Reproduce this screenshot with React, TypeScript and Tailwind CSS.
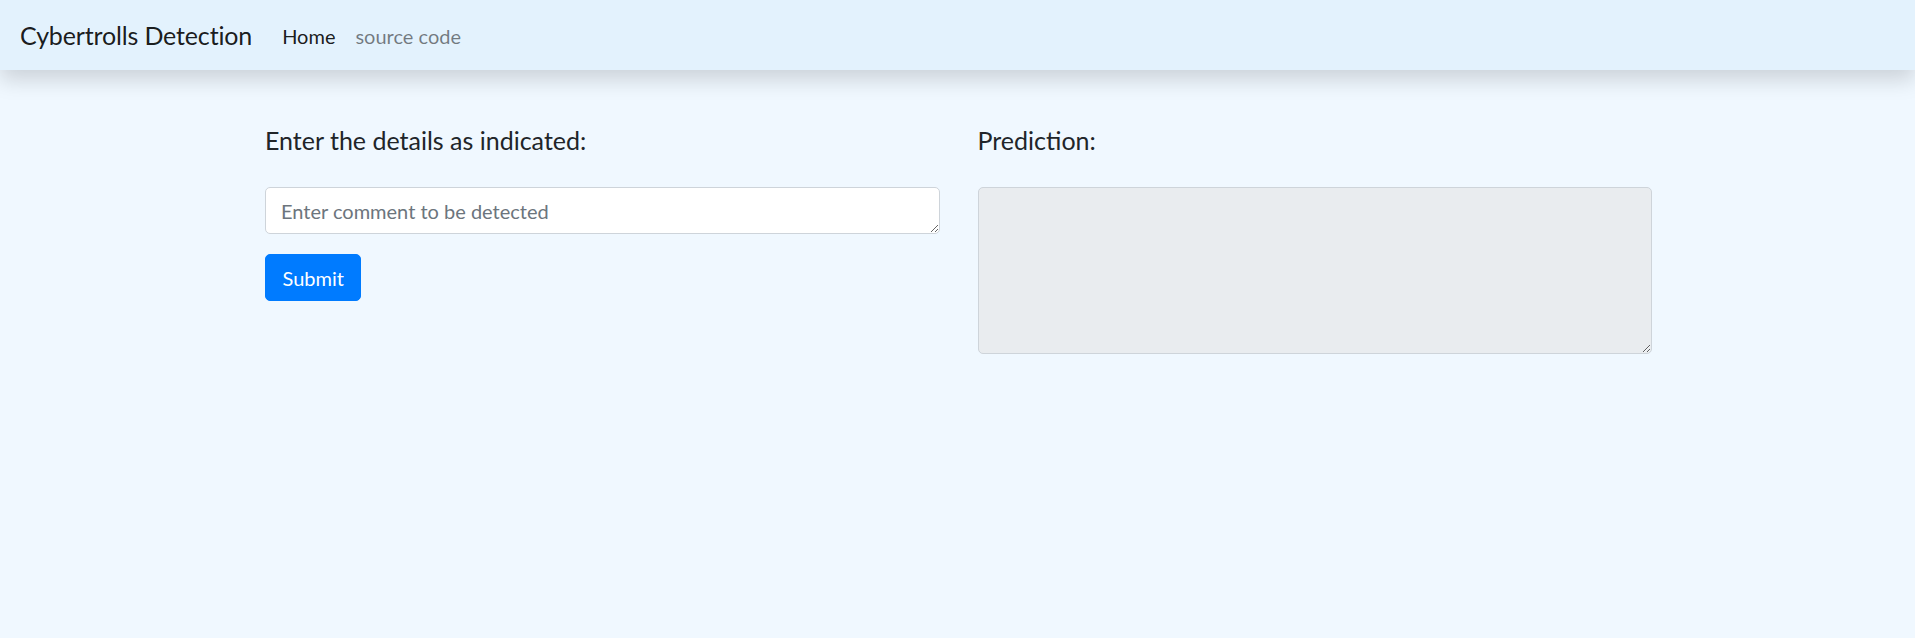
export default function App() {
  return (
    <div className="min-h-screen bg-[#f0f8ff] font-['Lato','Liberation_Sans',sans-serif] text-[#212529]">
      <nav className="relative z-10 flex h-[70px] items-center bg-[#e3f2fd] px-5 pt-[2px] shadow-[0_10px_20px_rgba(0,0,0,0.15)]">
        <a href="#" className="mr-5 text-[25px] leading-[1.5] tracking-[-0.15px] text-black/90">
          Cybertrolls Detection
        </a>
        <ul className="flex text-[20px] leading-[1.5]">
          <li>
            <a href="#" className="block px-[10px] text-black/90">
              Home
            </a>
          </li>
          <li>
            <a href="#" className="block px-[10px] text-black/50">
              source code
            </a>
          </li>
        </ul>
      </nav>

      <main className="mx-auto w-[1425px] pt-[54.5px]">
        <div className="grid grid-cols-2">
          <div className="pr-[18px] pl-[20px]">
            <h5 className="mb-[32.5px] text-[25px] leading-[1.2] font-normal">Enter the details as indicated:</h5>
            <form>
              <textarea
                rows={1}
                placeholder="Enter comment to be detected"
                className="block w-full rounded-[5px] border-[1.25px] border-[#ced4da] bg-white px-[15px] py-[7.5px] text-[20px] leading-[1.5] text-[#495057] placeholder:text-[#6c757d] outline-none"
              />
              <button
                type="button"
                className="mt-5 rounded-[5px] border-[1.25px] border-[#007bff] bg-[#007bff] px-[16.5px] py-[7.5px] text-[20px] leading-[1.5] text-white"
              >
                Submit
              </button>
            </form>
          </div>
          <div className="pr-[18px] pl-[20px]">
            <h5 className="mb-[32.5px] text-[25px] leading-[1.2] font-normal">Prediction:</h5>
            <textarea
              rows={5}
              readOnly
              className="block w-full rounded-[5px] border-[1.25px] border-[#ced4da] bg-[#e9ecef] px-[15px] py-[7.5px] text-[20px] leading-[1.5] text-[#495057] outline-none"
            />
          </div>
        </div>
      </main>
    </div>
  );
}
